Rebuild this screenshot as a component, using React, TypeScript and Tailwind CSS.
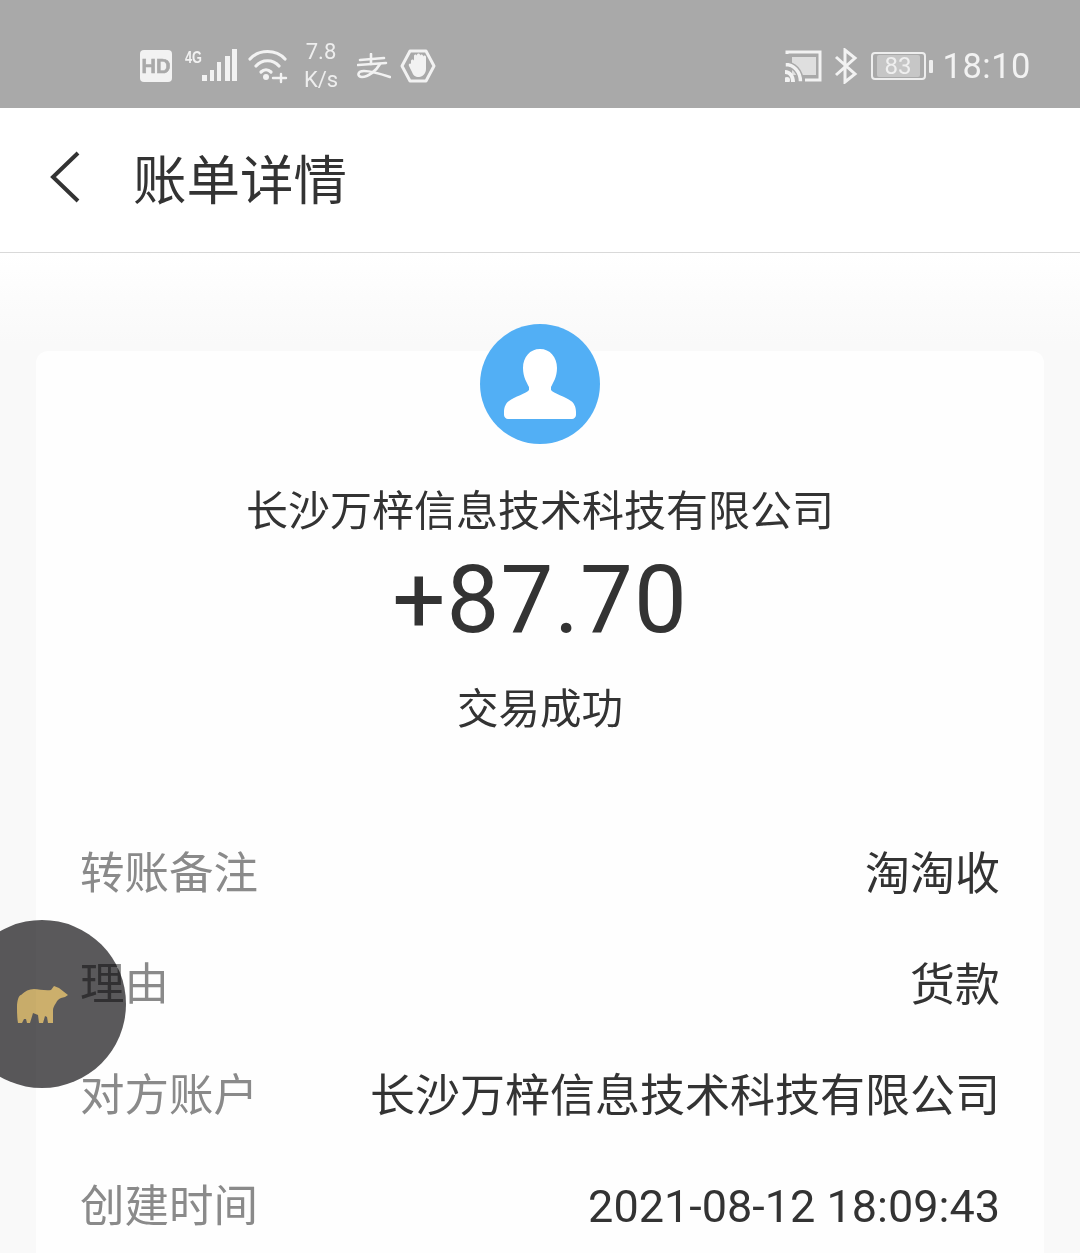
import React from "react";

const cjk = "font-['Noto_Sans_CJK_SC','Noto_Sans',sans-serif]";

function Row({ label, value, latin }: { label: string; value: string; latin?: boolean }) {
  return (
    <div className="flex h-[111px] items-center justify-between">
      <span className={`${cjk} text-[44.5px] leading-none text-[#8a8a8a]`}>{label}</span>
      <span
        className={
          latin
            ? "pt-[5px] font-['Roboto',sans-serif] text-[45px] leading-none text-[#333333]"
            : `${cjk} text-[45px] leading-none text-[#333333]`
        }
      >
        {value}
      </span>
    </div>
  );
}

function StatusLeft() {
  return (
    <div className="flex items-center text-[#f4f4f4]">
      <svg width="32" height="32" viewBox="0 0 32 32" className="mr-[11px]">
        <rect x="0" y="0" width="32" height="32" rx="4" fill="#f2f2f2" />
        <text x="16" y="23" textAnchor="middle" fontFamily="Liberation Sans" fontWeight="700" fontSize="20" stroke="#a9a9a9" strokeWidth="0.6" fill="#a9a9a9">HD</text>
      </svg>
      <svg width="56" height="34" viewBox="0 0 56 34" className="mr-[9px]">
        <text x="2" y="14" fontFamily="Liberation Sans" fontWeight="700" fontSize="16" textLength="17" lengthAdjust="spacingAndGlyphs" fill="#f2f2f2">4G</text>
        <rect x="19" y="26" width="5" height="6" fill="#f2f2f2" />
        <rect x="27" y="21" width="4" height="11" fill="#f2f2f2" />
        <rect x="34" y="13" width="4" height="19" fill="#f2f2f2" />
        <rect x="42" y="7" width="5" height="25" fill="#f2f2f2" />
        <rect x="49" y="0" width="5" height="32" fill="#f2f2f2" />
      </svg>
      <svg width="40" height="36" viewBox="0 0 40 36" className="mr-[15px]" fill="none" stroke="#f2f2f2" strokeWidth="3.2" strokeLinecap="round">
        <path d="M2 11C11 1 28 1 37 11" />
        <path d="M8 18C14 11 25 11 31 18" />
        <path d="M13 24C16 21 20 21 23 24" />
        <circle cx="18" cy="29" r="3" fill="#f2f2f2" stroke="none" />
        <path d="M25 30h13M33 26v8" strokeWidth="2.4" />
      </svg>
      <div className="mr-[18px] flex w-[36px] flex-col items-center font-['Roboto',sans-serif] text-[22px] leading-[28px] text-[#eeeeee]">
        <span>7.8</span>
        <span>K/s</span>
      </div>
      <svg width="34" height="26" viewBox="0 0 34 26" className="mr-[9px]" fill="none" stroke="#f2f2f2" strokeWidth="2.6" strokeLinecap="round">
        <path d="M3 7L27 5" />
        <path d="M14 1V11" />
        <path d="M1 12L29 10" />
        <path d="M23 11C19 18 11 24 5 24C0 24 0 18 7 18C14 18 24 21 33 24" />
      </svg>
      <svg width="36" height="34" viewBox="0 0 36 34" fill="none">
        <path d="M10 2H26L34 17L26 32H10L2 17Z" stroke="#f2f2f2" strokeWidth="3" strokeLinejoin="round" />
        <path d="M11 12c0-2 3-2 3 0V7c0-2 3-2 3 0V6c0-2 3-2 3 0v1c0-2 3-2 3 0v1c0-2 3-2 3 0v12c0 4-3 8-7 8s-6-2-7-5l-3-6c-1-2 1-3 2-2l0 0Z" fill="#f2f2f2" />
      </svg>
    </div>
  );
}

function StatusRight() {
  return (
    <div className="flex items-center text-[#f4f4f4]">
      <svg width="38" height="32" viewBox="0 0 38 32" className="mr-[11px]" fill="none">
        <path d="M2 4V2H35V30H20" stroke="#f2f2f2" strokeWidth="3" />
        <rect x="7" y="7" width="24" height="18" fill="#f2f2f2" opacity="0.75" />
        <path d="M0 12C10 12 18 20 18 32H13C13 23 8 17 0 17Z" fill="#f2f2f2" stroke="#a9a9a9" strokeWidth="1.5" />
        <path d="M0 20C6 20 10 25 10 32H6C6 27 4 24 0 24Z" fill="#f2f2f2" />
        <circle cx="2" cy="30" r="3" fill="#f2f2f2" />
      </svg>
      <svg width="24" height="36" viewBox="0 0 24 36" className="mr-[13px]" fill="none" stroke="#f2f2f2" strokeWidth="3">
        <path d="M2 9L21 26L11 34V2L21 10L2 27" />
      </svg>
      <div className="relative mr-[17px] flex h-[28px] w-[55px] items-center justify-center rounded-[4px] border-2 border-[#eeeeee]">
        <div className="flex h-[22px] w-[43px] items-center justify-center rounded-[2px] bg-[#c6c6c6] font-['Roboto',sans-serif] text-[24px] leading-none text-[#efefef]">
          83
        </div>
        <div className="absolute right-[-9px] top-[6px] h-[13px] w-[4px] rounded-[1px] bg-[#eeeeee]" />
      </div>
      <span className="font-['Roboto',sans-serif] text-[34.5px] leading-none tracking-[0.5px] text-[#f2f2f2]">18:10</span>
    </div>
  );
}

export default function App() {
  return (
    <div className="relative h-[1253px] w-[1080px] overflow-hidden bg-white">
      <div className="flex h-[108px] items-center justify-between bg-[#a9a9a9] pl-[140px] pr-[49px] pt-[24px]">
        <StatusLeft />
        <StatusRight />
      </div>

      <div className="flex h-[145px] items-center border-b border-[#d9d9d9] bg-white pb-[6px] pl-[48px]">
        <svg width="34" height="56" viewBox="0 0 34 56" fill="none" className="mr-[51px]">
          <path d="M30 4L5 28L30 52" stroke="#333333" strokeWidth="4" />
        </svg>
        <span className={`${cjk} text-[53.5px] leading-none text-[#333333]`}>账单详情</span>
      </div>

      <div className="h-[1000px] bg-[linear-gradient(to_bottom,#ffffff_0px,#f9f9f9_90px,#f9f9f9_100%)] px-[36px] pt-[98px]">
        <div className="h-[940px] rounded-t-[12px] bg-[#fefefe] px-[44px]">
          <div className="flex flex-col items-center">
            <div className="mt-[-27px] flex h-[120px] w-[120px] items-center justify-center rounded-full bg-[#52aff5]">
              <svg width="72" height="70" viewBox="0 0 72 70" fill="white">
                <path d="M36 0C46 0 53 8 53 19C53 28 49 34 47 38V41C49 44 62 48 67 52C70 54 72 58 72 63V66C72 68 70 70 68 70H4C2 70 0 68 0 66V63C0 58 2 54 5 52C10 48 23 44 25 41V38C23 34 19 28 19 19C19 8 26 0 36 0Z" />
              </svg>
            </div>
            <div className={`${cjk} mt-[41px] text-[42px] leading-[46px] text-[#333333]`}>长沙万梓信息技术科技有限公司</div>
            <div className="mt-[23px] font-['Roboto',sans-serif] text-[94px] leading-[92px] tracking-[1px] text-[#333333]">+87.70</div>
            <div className={`${cjk} mt-[37px] text-[41.5px] leading-[46px] text-[#333333]`}>交易成功</div>
          </div>
          <div className="mt-[86px]">
            <Row label="转账备注" value="淘淘收" />
            <Row label="理由" value="货款" />
            <Row label="对方账户" value="长沙万梓信息技术科技有限公司" />
            <Row label="创建时间" value="2021-08-12 18:09:43" latin />
          </div>
        </div>
      </div>

      <div className="absolute left-[-42px] top-[920px] flex h-[168px] w-[168px] items-center justify-center rounded-full bg-[#5a595b] mix-blend-multiply">
        <svg width="51" height="37" viewBox="0 0 51 37" fill="#cdb06c">
          <path d="M0 21C0 14 2 9 4 9C8 5 12 3 17 3C22 3 28 5 34 4L37 0L42 2C45 4 48 7 51 9L48 11L44 12C41 13 40 15 39 17C37 20 36 22 36 24L36 37H31L30 31L28 30L26 37H22L21 29L16 27L13 37H10L9 33L7 33L5 37H1C0 32 0 26 0 21Z" />
        </svg>
      </div>
    </div>
  );
}
